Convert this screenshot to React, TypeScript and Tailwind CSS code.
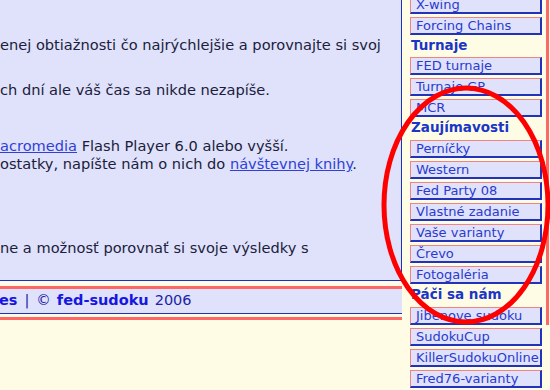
import React from 'react';

const lavender = 'bg-[#dfe2fa]';

type MenuEntry = { label: string; heading?: boolean; tall?: boolean };

const MENU: MenuEntry[] = [
  { label: 'X-wing' },
  { label: 'Forcing Chains' },
  { label: 'Turnaje', heading: true },
  { label: 'FED turnaje' },
  { label: 'Turnaje GP' },
  { label: 'MCR' },
  { label: 'Zaujímavosti', heading: true, tall: true },
  { label: 'Perníčky' },
  { label: 'Western' },
  { label: 'Fed Party 08' },
  { label: 'Vlastné zadanie' },
  { label: 'Vaše varianty' },
  { label: 'Črevo' },
  { label: 'Fotogaléria' },
  { label: 'Páči sa nám', heading: true, tall: true },
  { label: 'Jibenove sudoku' },
  { label: 'SudokuCup' },
  { label: 'KillerSudokuOnline' },
  { label: 'Fred76-varianty' },
  { label: '' },
];

const MenuItem: React.FC<{ entry: MenuEntry }> = ({ entry }) => {
  if (entry.heading) {
    return (
      <div
        className={`${entry.tall ? 'h-[20px]' : 'h-[19px]'} pl-[1px] text-[13.5px] font-bold leading-[15px] text-[#1a36c8] whitespace-nowrap`}
      >
        {entry.label}
      </div>
    );
  }
  return (
    <a
      href="#"
      className={`block h-[18px] mb-[3px] border-t border-l border-t-[#f08484] border-l-[#f08484] border-r-2 border-b-2 border-r-[#2233bb] border-b-[#2233bb] ${lavender} pl-[5px] text-[13px] leading-[15px] text-[#2a3ad0] whitespace-nowrap overflow-hidden`}
    >
      {entry.label}
    </a>
  );
};

export default function App() {
  return (
    <div className="relative w-[550px] h-[390px] overflow-hidden bg-[#fffce6] font-['DejaVu_Sans',Verdana,sans-serif]">
      <div className="flex">
        {/* main column */}
        <div className="w-[402px] shrink-0 flex flex-col">
          <div
            className={`h-[281px] border-r border-b border-[#1a32c0] ${lavender} text-[14.6px] leading-[18px] text-[#201c3c] whitespace-nowrap overflow-hidden`}
          >
            <div className="mt-[36px]">enej obtiažnosti čo najrýchlejšie a porovnajte si svoj</div>
            <div className="mt-[27px]">ch dní ale váš čas sa nikde nezapíše.</div>
            <div className="mt-[38px]">
              <a href="#" className="text-[#2f3fd8] underline">acromedia</a> Flash Player 6.0 alebo vyšší.
            </div>
            <div>
              ostatky, napíšte nám o nich do{' '}
              <a href="#" className="text-[#2f3fd8] underline">návštevnej knihy</a>.
            </div>
            <div className="mt-[66px]">ne a možnosť porovnať si svoje výsledky s</div>
          </div>
          <div className="h-[5px]" />
          <div className="h-[3px] bg-[#ff6666]" />
          <div
            className={`h-[25px] border-b border-[#1a32c0] ${lavender} flex items-center text-[14.5px] text-[#2222a8] whitespace-nowrap`}
          >
            <a href="#" className="font-bold text-[#1616e0] -ml-[1px]">es</a>
            <span className="mx-[7px]">|</span>
            <span>©</span>
            <a href="#" className="ml-[6px] font-bold text-[#1616e0]">fed-sudoku</a>
            <span className="ml-[6px]">2006</span>
          </div>
          <div className="h-[3px]" />
          <div className="h-[3px] bg-[#ff6666]" />
        </div>

        {/* side menu */}
        <div className="flex flex-1">
          <div className="ml-[8px] w-[132px] -mt-[4px] flex flex-col">
            {MENU.map((m, i) => (
              <MenuItem key={i} entry={m} />
            ))}
          </div>
          <div className="ml-[4px] w-[3px] h-[325px] bg-[#ff6666]" />
        </div>
      </div>

      {/* red hand-drawn annotation */}
      <svg
        className="absolute inset-0 pointer-events-none"
        width="550"
        height="390"
        viewBox="0 0 550 390"
      >
        <ellipse cx="466" cy="205" rx="82" ry="117" fill="none" stroke="#ff0000" strokeWidth="5" />
      </svg>
    </div>
  );
}
